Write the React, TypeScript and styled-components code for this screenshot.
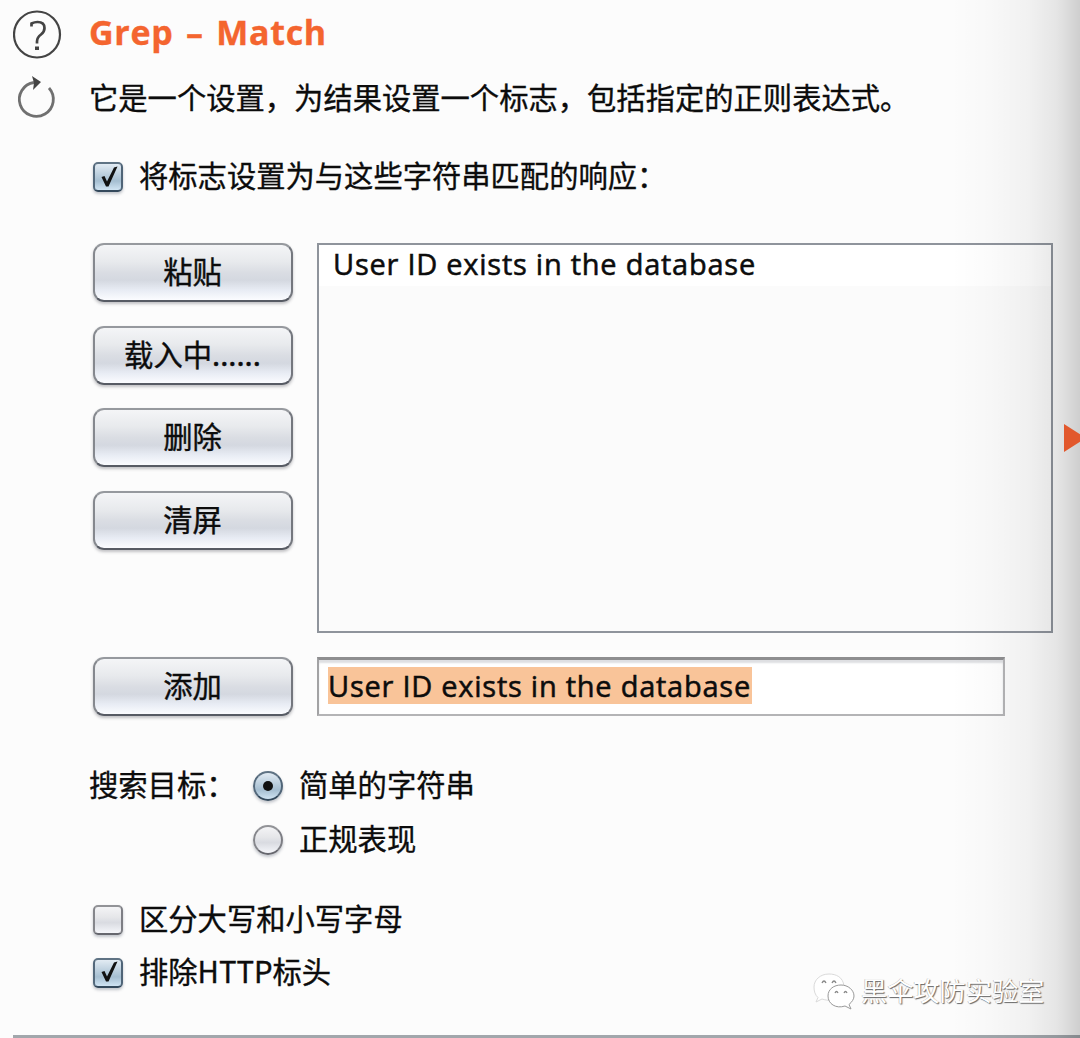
import React from "react";
import styled, { createGlobalStyle, css } from "styled-components";

const GlobalStyle = createGlobalStyle`
  body {
    margin: 0;
    background: #fcfcfc;
  }
`;

const sans = `"Open Sans", "Noto Sans CJK SC", sans-serif`;
const cjk = `"Noto Sans CJK SC", sans-serif`;

const Panel = styled.main`
  position: relative;
  display: flex;
  flex-direction: column;
  box-sizing: border-box;
  width: 1080px;
  height: 1038px;
  overflow: hidden;
  background: #fcfcfc;
  color: #0c0c0c;
  font-family: ${cjk};
  font-size: 29.3px;
  line-height: 40px;
  -webkit-text-stroke: 0.35px currentColor;
`;

const EdgeShade = styled.div`
  position: absolute;
  inset: 0 0 0 auto;
  width: 130px;
  pointer-events: none;
  background: linear-gradient(
    to right,
    rgba(0, 0, 0, 0) 0%,
    rgba(0, 0, 0, 0.015) 30%,
    rgba(0, 0, 0, 0.045) 60%,
    rgba(0, 0, 0, 0.09) 82%,
    rgba(0, 0, 0, 0.18) 100%
  );
`;

const SideArrow = styled.svg`
  position: absolute;
  right: 0;
  top: 424px;
`;

const HeadRow = styled.header<{ $height: number }>`
  display: grid;
  grid-template-columns: 76px 1fr;
  align-items: center;
  height: ${(p) => p.$height}px;
  padding-left: 13px;
`;

const Title = styled.h1`
  margin: 0;
  padding-bottom: 3px;
  color: #f4652f;
  font: 700 34px/44px ${sans};
  letter-spacing: 0.7px;
  word-spacing: 3px;
  white-space: nowrap;
`;

const Text = styled.span`
  padding-bottom: 6px;
  white-space: nowrap;
`;

const OptionRow = styled.label<{ $height: number }>`
  display: flex;
  align-items: center;
  gap: 16px;
  height: ${(p) => p.$height}px;
`;

const FirstOption = styled.section`
  padding: 17px 0 37px 93px;
`;

const Editor = styled.section`
  display: grid;
  grid-template-columns: 200px 736px;
  column-gap: 24px;
  row-gap: 24px;
  padding-left: 93px;
`;

const ButtonStack = styled.div`
  display: flex;
  flex-direction: column;
  gap: 23.7px;
`;

const Button = styled.button`
  box-sizing: border-box;
  width: 200px;
  height: 59px;
  padding: 0 1px 5px 0;
  border: 2px solid;
  border-color: #96999e #74777e #575b64 #85888e;
  border-radius: 11px;
  background: linear-gradient(
    #f4f5f7 0%,
    #e8eaed 30%,
    #dadde3 50%,
    #d4d8e0 64%,
    #e8ecf4 82%,
    #fbfcff 100%
  );
  box-shadow: 0 2px 3px rgba(60, 60, 70, 0.3);
  color: #0c0c0c;
  font: 400 29.3px/40px ${cjk};
  -webkit-text-stroke: 0.4px currentColor;
`;

const ListBox = styled.div`
  box-sizing: border-box;
  height: 390px;
  border: 2.5px solid #8f949c;
  background: #fbfbfb;
`;

const latinText = css`
  font: 400 29px/37px ${sans};
  letter-spacing: 0.75px;
  white-space: nowrap;
  color: #0c0c0c;
  -webkit-text-stroke: 0.55px currentColor;
`;

const ListItem = styled.div`
  ${latinText}
  height: 41px;
  padding-left: 14px;
  background: #fff;
  line-height: 37px;
`;

const Field = styled.div`
  display: flex;
  align-items: center;
  box-sizing: border-box;
  width: 688px;
  height: 59px;
  padding: 0 9px 3px;
  border: 2px solid #b4b4b6;
  border-top: 3px solid #8e8e90;
  border-left-color: #a2a2a4;
  background: #fff;
  box-shadow: inset 0 3px 2px #dedfe2;
`;

const Selection = styled.span`
  ${latinText}
  width: 424px;
  height: 37px;
  background: #f9c499;
`;

const Targets = styled.section`
  display: grid;
  grid-template-columns: 164px 1fr;
  padding: 43px 0 0 89px;
`;

const TargetLabel = styled.span`
  height: 54px;
  line-height: 49px;
`;

const Flags = styled.section`
  padding: 26px 0 0 93px;
`;

const Check = styled.span<{ $on: boolean; $round?: boolean }>`
  display: grid;
  place-items: center;
  flex: none;
  box-sizing: border-box;
  width: 30px;
  height: 30px;
  border: 2.5px solid;
  border-color: ${(p) => (p.$on ? "#5f7384 #4f6477 #34495c #53687b" : "#929397 #7d7e84 #66676e #85868b")};
  border-radius: ${(p) => (p.$round ? "50%" : "5px")};
  background: ${(p) =>
    p.$on
      ? "linear-gradient(#e2ebf3 0%, #bccfde 40%, #a5bed1 65%, #d0e4f3 100%)"
      : "linear-gradient(#f4f4f6 0%, #e5e6e9 40%, #d9dbe1 60%, #f5f6fa 100%)"};
  box-shadow: 0 2px 3px rgba(60, 70, 90, 0.3);
`;

const Watermark = styled.div`
  position: absolute;
  left: 812px;
  top: 968px;
  display: flex;
  align-items: center;
  gap: 6px;
  height: 44px;
  color: #fff;
  font-size: 26.2px;
  text-shadow: 1px 1px 1px #666, -0.5px -0.5px 0 #b4b4b4;
  -webkit-text-stroke: 0;
  white-space: nowrap;
`;

const BottomRule = styled.hr`
  width: 1067px;
  height: 3px;
  margin: auto 0 0 13px;
  border: 0;
  background: #a2a7ac;
`;

const HelpIcon = () => (
  <svg width="50" height="50" viewBox="0 0 50 50" fill="none" stroke="#444">
    <circle cx="24" cy="25.5" r="23" strokeWidth="2.2" />
    <path d="M18.500 17.500V14.500q3-1.500 6-1.500 7 0 7 6 0 4-3.500 6.500-4 3-4 7v2" strokeWidth="2.7" />
    <path d="M24 37.500v3.500" strokeWidth="4" />
  </svg>
);

const ResetIcon = () => (
  <svg width="50" height="46" viewBox="0 0 50 46" fill="none">
    <path d="M21 6.500a17 17 0 1 0 15 5.500" stroke="#707070" strokeWidth="2.8" />
    <path d="M19 0l9 6-8 8 1-7z" fill="#444" />
  </svg>
);

const Tick = () => (
  <svg width="25" height="25" viewBox="0 0 25 25">
    <path d="M5.500 12l3-1 2.500 5.500 7-14 3.500-1-9 20-2.500 0z" fill="#111" />
  </svg>
);

const Dot = () => (
  <svg width="12" height="12" viewBox="0 0 12 12">
    <circle cx="6" cy="6" r="5" fill="#111" />
  </svg>
);

const ChatLogo = () => (
  <svg width="43" height="40" viewBox="0 0 43 40" fill="#fff" stroke="#999" strokeWidth="1">
    <path d="M6 27.500l-2 4.500 6-3c12 4 23-2 22-13C31 7 24 4 17 4 8 4 2 10 2 17c0 4 1 8 4 10.500z" stroke="#dadada" />
    <path d="M37 34.500l2 4.500-6-3c-9 3-17-2-17-10 0-7 6-11 13-11s13 5 13 11c0 3-2 6-5 8.500z" stroke="#999" />
    <path d="M10 13q2-4 4 0M20 13q2-4 4 0M23 23q1.500-3 3 0M32 23q1.500-3 3 0" fill="none" stroke="#888" strokeWidth="1.3" />
  </svg>
);

const actions = ["粘贴", "载入中......", "删除", "清屏"];
const entry = "User ID exists in the database";

export default function App() {
  return (
    <Panel lang="zh-CN">
      <GlobalStyle />
      <HeadRow $height={67}>
        <HelpIcon />
        <Title>Grep – Match</Title>
      </HeadRow>
      <HeadRow $height={64}>
        <ResetIcon />
        <Text>它是一个设置，为结果设置一个标志，包括指定的正则表达式。</Text>
      </HeadRow>
      <FirstOption>
        <OptionRow $height={58}>
          <Check $on>
            <Tick />
          </Check>
          <Text>将标志设置为与这些字符串匹配的响应：</Text>
        </OptionRow>
      </FirstOption>
      <Editor>
        <ButtonStack>
          {actions.map((name) => (
            <Button key={name}>{name}</Button>
          ))}
        </ButtonStack>
        <ListBox>
          <ListItem>{entry}</ListItem>
        </ListBox>
        <Button>添加</Button>
        <Field>
          <Selection>{entry}</Selection>
        </Field>
      </Editor>
      <Targets>
        <TargetLabel>搜索目标：</TargetLabel>
        <div>
          <OptionRow $height={54}>
            <Check $on $round>
              <Dot />
            </Check>
            <Text>简单的字符串</Text>
          </OptionRow>
          <OptionRow $height={54}>
            <Check $on={false} $round />
            <Text>正规表现</Text>
          </OptionRow>
        </div>
      </Targets>
      <Flags>
        <OptionRow $height={53}>
          <Check $on={false} />
          <Text>区分大写和小写字母</Text>
        </OptionRow>
        <OptionRow $height={53}>
          <Check $on>
            <Tick />
          </Check>
          <Text>排除HTTP标头</Text>
        </OptionRow>
      </Flags>
      <BottomRule />
      <EdgeShade />
      <SideArrow width="16" height="28" viewBox="0 0 16 28">
        <path d="M0 0L22 14 0 28z" fill="#e2582c" />
      </SideArrow>
      <Watermark>
        <ChatLogo />
        <span>黑伞攻防实验室</span>
      </Watermark>
    </Panel>
  );
}
